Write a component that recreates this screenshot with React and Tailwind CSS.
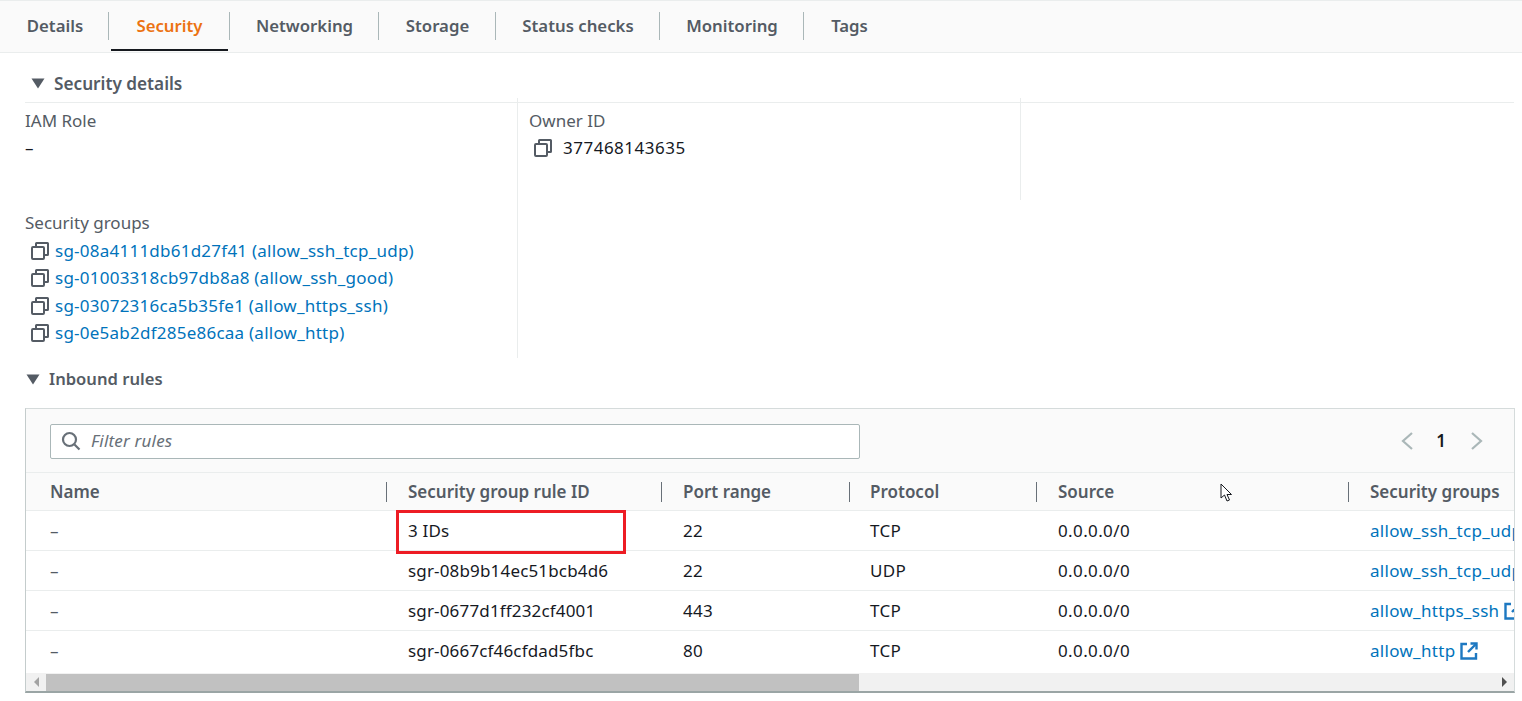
function CopyIcon() {
  return (
    <svg width="18" height="18" viewBox="0 0 18 18" fill="none" stroke="#545b64" strokeWidth="2" className="shrink-0">
      <rect x="1" y="5" width="12" height="12" rx="1" />
      <path d="M5 4.5V1.5a.5.5 0 0 1 .5-.5H16.5a.5.5 0 0 1 .5.5V12.5a.5.5 0 0 1-.5.5H14" />
    </svg>
  );
}
function Caret({ className }) {
  return (
    <svg width="14" height="11" viewBox="0 0 14 11" className={className}>
      <path d="M0.5 0.5H13.5L7 10.5Z" fill="#545b64" />
    </svg>
  );
}
function ExtIcon() {
  return (
    <svg width="18" height="18" viewBox="0 0 18 18" fill="none" stroke="#1d78c1" strokeWidth="2.4" className="shrink-0 ml-[5px]">
      <path d="M7 2H1.5V16.5H16V11" />
      <path d="M10.5 1.5H16.5V7.5" />
      <path d="M16 2L8 10" />
    </svg>
  );
}
const tabs = ["Details", "Security", "Networking", "Storage", "Status checks", "Monitoring", "Tags"];
const tabWidths = ["w-[109px] pl-[2px]", "w-[121px] pl-[1px]", "w-[149px] pl-[1px]", "w-[117px] pl-[1px]", "w-[164px] pl-[1px]", "w-[144px] pl-[1px]", "w-[90px] pl-[1px]"];
const groups = [
  "sg-08a4111db61d27f41 (allow_ssh_tcp_udp)",
  "sg-01003318cb97db8a8 (allow_ssh_good)",
  "sg-03072316ca5b35fe1 (allow_https_ssh)",
  "sg-0e5ab2df285e86caa (allow_http)",
];
const colW = ["w-[361px] pl-[24px]", "w-[275px] pl-[21px]", "w-[188px] pl-[21px]", "w-[187px] pl-[20px]", "w-[312px] pl-[21px]", "w-[400px] pl-[21px]"];
const colTrack = ["", "tracking-[0.16px]", "tracking-[0.3px]", "tracking-[0.3px]", "tracking-[0.38px]", "tracking-[0.3px] text-[#0073bb]"];
const headers = ["Name", "Security group rule ID", "Port range", "Protocol", "Source", "Security groups"];
const rows = [
  ["–", "3 IDs", "22", "TCP", "0.0.0.0/0", "allow_ssh_tcp_udp"],
  ["–", "sgr-08b9b14ec51bcb4d6", "22", "UDP", "0.0.0.0/0", "allow_ssh_tcp_udp"],
  ["–", "sgr-0677d1ff232cf4001", "443", "TCP", "0.0.0.0/0", "allow_https_ssh"],
  ["–", "sgr-0667cf46cfdad5fbc", "80", "TCP", "0.0.0.0/0", "allow_http"],
];
export default function App() {
  return (
    <div className="w-[1522px] h-[701px] overflow-hidden bg-white text-[17px] leading-[22px] text-[#16191f] font-['Noto_Sans',sans-serif]">
      <div className="h-[53px] bg-[#fafafa] border-t border-b border-[#eaeded] flex pt-[11px]">
        {tabs.map((t, i) => (
          <div key={t} className={`${tabWidths[i]} relative h-[28px] flex items-center justify-center text-[16.75px] font-semibold ${i === 1 ? "text-[#ec7211]" : "text-[#545b64]"} ${i < 6 ? "border-r border-[#aab7b8]" : ""}`}>
            {t}
            {i === 1 && <div className="absolute left-[2px] right-[1px] top-[37px] h-[2px] bg-[#16191f]" />}
          </div>
        ))}
      </div>
      <div className="pl-[25px] pr-[8px]">
        <div className="h-[50px] border-b border-[#eaeded] flex items-center pl-[6px] pt-[12px]">
          <Caret />
          <span className="ml-[9px] font-semibold text-[#545b64] text-[17.2px]">Security details</span>
        </div>
        <div className="grid grid-cols-[493px_503px_1fr] -mt-[5px]">
          <div className="row-span-2 border-r border-[#eaeded] h-[260px] pt-[12px]">
            <div className="text-[#545b64] h-[22px]">IAM Role</div>
            <div className="mt-[5px] h-[22px]">–</div>
            <div className="mt-[53px] text-[#545b64] h-[22px]">Security groups</div>
            <div className="mt-[6px] pl-[6px] flex flex-col gap-[5.4px]">
              {groups.map((g) => (
                <div key={g} className="flex items-center h-[22px] text-[#0073bb] whitespace-nowrap tracking-[0.24px]">
                  <CopyIcon />
                  <span className="ml-[6px]">{g}</span>
                </div>
              ))}
            </div>
          </div>
          <div className="border-r border-[#eaeded] h-[102px] pl-[11px] pt-[12px]">
            <div className="text-[#545b64] h-[22px]">Owner ID</div>
            <div className="mt-[5px] flex items-center h-[22px] pl-[5px]">
              <CopyIcon />
              <span className="ml-[11px] tracking-[0.5px]">377468143635</span>
            </div>
          </div>
          <div />
        </div>
        <div className="h-[36px] flex items-center mt-[3px] font-semibold text-[#545b64] text-[16.6px]">
          <Caret className="ml-[1px]" />
          <span className="ml-[9px]">Inbound rules</span>
        </div>
        <div className="mt-[11px] h-[285px] w-[1490px] border border-[#d5dbdb] border-l-[#c4cccc] border-b-[#9aa5a5] border-b-2 overflow-hidden bg-white flex flex-col">
          <div className="h-[64px] bg-[#fafafa] border-b border-[#eaeded] flex items-center pl-[24px] shrink-0">
            <div className="w-[810px] h-[35px] mt-[1px] bg-white border border-[#aab7b8] rounded-[2px] flex items-center pl-[10px]">
              <svg width="20" height="20" viewBox="0 0 20 20" fill="none" stroke="#687078" strokeWidth="2.2" className="shrink-0">
                <circle cx="8.5" cy="8.5" r="6.5" />
                <path d="M13.5 13.5L18.5 18.5" />
              </svg>
              <span className="ml-[10px] italic text-[#687078] tracking-[0.2px]">Filter rules</span>
            </div>
            <div className="ml-auto flex items-center pr-[30px]">
              <svg width="14" height="20" viewBox="0 0 14 20" fill="none" stroke="#aab7b8" strokeWidth="2.2"><path d="M12 2L3 10L12 18" /></svg>
              <span className="ml-[22px] mr-[24px] font-semibold">1</span>
              <svg width="14" height="20" viewBox="0 0 14 20" fill="none" stroke="#aab7b8" strokeWidth="2.2"><path d="M2 2L11 10L2 18" /></svg>
            </div>
          </div>
          <div className="flex h-[38px] shrink-0 bg-[#fafafa] border-b border-[#eaeded] items-center font-semibold text-[#545b64] whitespace-nowrap relative">
            {headers.map((h, i) => (
              <div key={h} className={`${colW[i]} shrink-0 h-[20px] flex items-center ${i < 5 ? "border-r border-[#687078]" : ""}`}>{h}</div>
            ))}
            <svg width="13" height="20" viewBox="0 0 13 20" className="absolute left-[1194px] top-[10px]" fill="#fff" stroke="#16191f" strokeWidth="1">
              <path d="M1 1V15L4.5 12L7 18L9.5 17L7 11.5H11.5Z" />
            </svg>
          </div>
          {rows.map((r, ri) => (
            <div key={ri} className={`flex h-[40px] shrink-0 items-center whitespace-nowrap relative ${ri < 3 ? "border-b border-[#eaeded]" : ""}`}>
              {r.map((c, i) => (
                <div key={i} className={`${colW[i]} ${colTrack[i]} shrink-0 flex items-center ${i === 0 ? "text-[#545b64]" : ""}`}>
                  {c}
                  {i === 5 && <ExtIcon />}
                </div>
              ))}
              {ri === 0 && <div className="absolute left-[370px] -top-[1px] w-[230px] h-[44px] border-[3px] border-[#ed1c24] z-10" />}
            </div>
          ))}
          <div className="mt-auto h-[18px] shrink-0 bg-[#f1f1f1] flex items-center">
            <div className="w-[20px] h-full flex items-center justify-center shrink-0">
              <svg width="5" height="10" viewBox="0 0 5 10"><path d="M5 0V10L0 5Z" fill="#a3a3a3" /></svg>
            </div>
            <div className="w-[813px] h-[17px] bg-[#c1c1c1]" />
            <div className="ml-auto w-[20px] h-full flex items-center justify-center shrink-0">
              <svg width="5" height="10" viewBox="0 0 5 10"><path d="M0 0V10L5 5Z" fill="#505050" /></svg>
            </div>
          </div>
        </div>
      </div>
    </div>
  );
}
